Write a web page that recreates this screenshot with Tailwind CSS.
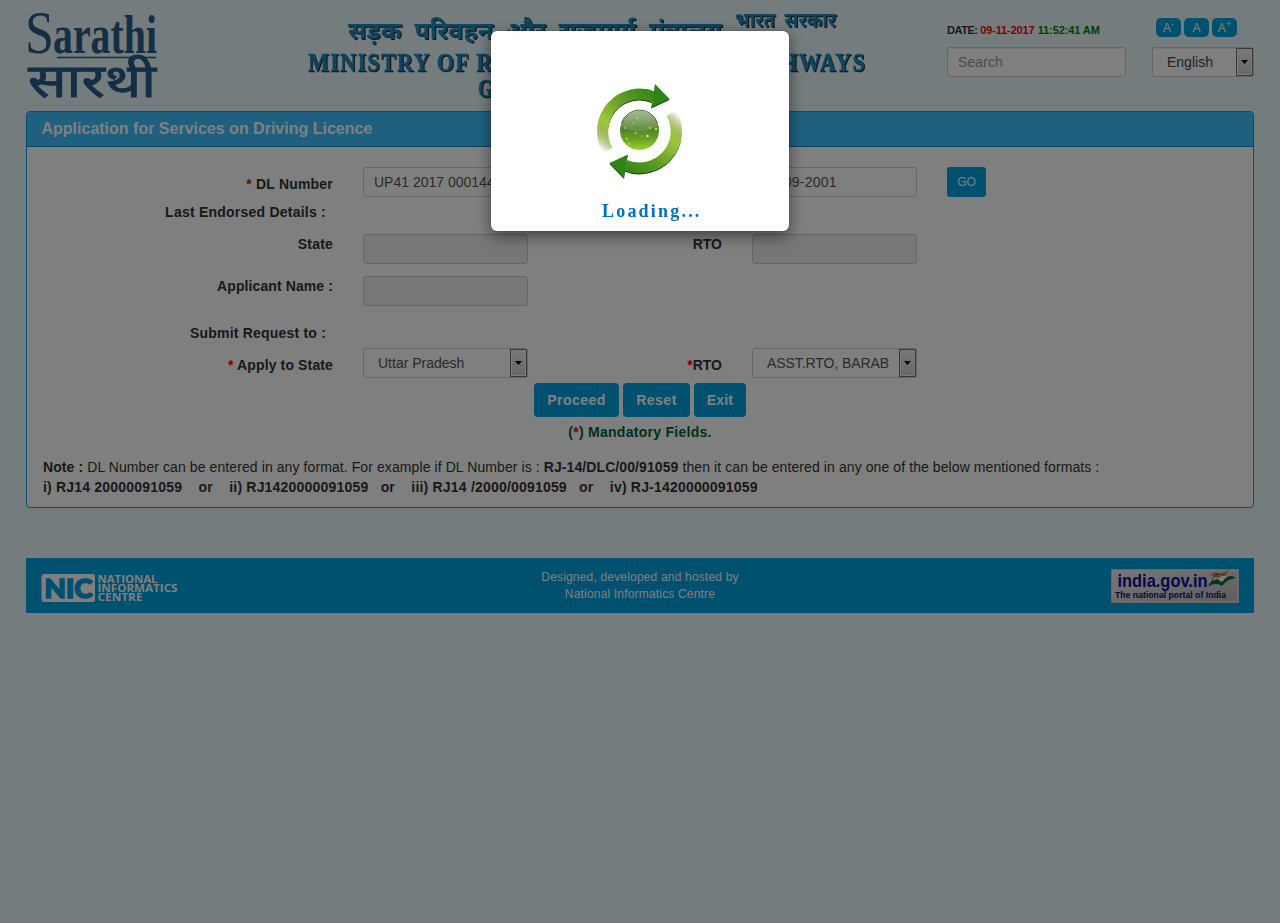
<!DOCTYPE html>
<html lang="en">
<head>
<meta charset="utf-8">
<title>Application for Services on Driving Licence</title>
<script src="https://cdn.jsdelivr.net/npm/@tailwindcss/browser@4"></script>
</head>
<body class="min-h-screen overflow-hidden bg-[#eaf9fd] font-['Liberation_Sans',Arial,sans-serif] text-sm leading-5 text-[#333]">
<div class="px-[26px]">
  <header class="flex h-[111px]">
    <svg class="mt-2 h-[92px] w-[134px] shrink-0 overflow-visible" viewBox="26 8 134 92" fill="#285c8c">
      <text x="25" y="53" font-family="Liberation Serif, serif" font-size="61" textLength="29" lengthAdjust="spacingAndGlyphs">S</text>
      <text x="53" y="53" font-family="Liberation Serif, serif" font-weight="bold" font-size="54" textLength="104" lengthAdjust="spacingAndGlyphs">arathi</text>
      <path d="M57 57.500h99" stroke="#285c8c" stroke-width="1.500"/>
      <text x="28" y="97" font-family="Noto Sans Devanagari, Noto Sans, sans-serif" font-size="47" stroke="#285c8c" stroke-width="1" textLength="128" lengthAdjust="spacingAndGlyphs">सारथी</text>
    </svg>
    <svg class="ml-[140px] mt-1 h-[104px] w-[580px] shrink-0 drop-shadow-[1px_1.5px_.5px_#222]" viewBox="300 4 580 104" fill="#2088be">
      <g font-family="Noto Sans Devanagari, Noto Sans, sans-serif" font-weight="bold">
        <text x="348" y="38.500" font-size="24" textLength="374" lengthAdjust="spacingAndGlyphs" word-spacing="6">सड़क परिवहन और राजमार्ग मंत्रालय</text>
        <text x="735" y="27" font-size="20" textLength="101" lengthAdjust="spacingAndGlyphs" word-spacing="5">भारत सरकार</text>
      </g>
      <g font-family="Liberation Serif, serif" font-weight="bold" font-size="25" stroke="#2088be" stroke-width=".4">
        <text x="308" y="71" textLength="558" lengthAdjust="spacingAndGlyphs" letter-spacing="1.500">MINISTRY OF ROAD TRANSPORT &amp; HIGHWAYS</text>
        <text x="478" y="97" textLength="230" lengthAdjust="spacingAndGlyphs">GOVERNMENT OF INDIA</text>
      </g>
    </svg>
    <div class="ml-[67px] w-[307px] shrink-0 pt-[17px]">
      <div class="flex h-[30px] items-start justify-between pr-[17px]">
        <p class="pt-[3px] text-[11px] font-bold whitespace-nowrap"><span class="tracking-[-.45px]">DATE: </span><span class="tracking-[-.12px] text-[#f00]">09-11-2017</span> <span class="tracking-[-.1px] text-[#008000]">11:52:41 AM</span></p>
        <div class="flex gap-[3px] pt-px text-xs leading-[20px] text-white">
          <span class="flex h-[19px] w-[25px] justify-center rounded-[5px] bg-[#00a0df]">A<sup class="top-[2px] text-[9px] leading-none">-</sup></span>
          <span class="flex h-[19px] w-[25px] justify-center rounded-[5px] bg-[#00a0df]">A</span>
          <span class="flex h-[19px] w-[25px] justify-center rounded-[5px] bg-[#00a0df]">A<sup class="top-[2px] text-[9px] leading-none">+</sup></span>
        </div>
      </div>
      <div class="flex justify-between">
        <div class="h-[30px] w-[179px] rounded-[3px] border border-[#ccc] bg-white px-[10px] py-1 text-[#999] shadow-[inset_0_1px_1px_#00000013]"><span class="tracking-[.1px]">Search</span></div>
        <div class="flex h-[30px] w-[102px] rounded-[3px] border border-[#ccc] bg-white pl-[14px] shadow-[inset_0_1px_1px_#00000013]">
          <span class="grow py-1 text-[#444]">English</span>
          <span class="flex w-[17px] items-center justify-center border border-[#707070] bg-linear-to-b from-[#f0f0f0] to-[#cfcfcf] shadow-[inset_0_0_0_1px_#f6f6f6]"><svg class="h-1 w-[7px]" viewBox="0 0 7 4"><path d="M0 0h7L3.500 4z"/></svg></span>
        </div>
      </div>
    </div>
  </header>

  <main class="h-[397px] rounded border border-[#00a0df] bg-white">
    <h1 class="h-[35px] border-b border-[#0d86c0] bg-[#3ec0ff] px-[14.5px] pt-[7px] text-base leading-5 font-bold text-white">Application for Services on Driving Licence</h1>
    <div class="mt-5 grid grid-cols-[306px_165px_164px_165px_39px] grid-rows-[30px_37px_42px_48px_24px_35px] gap-x-[30px] [&>b]:text-right [&>b]:whitespace-nowrap">
      <b class="pt-[7px] tracking-[.2px]"><span class="text-[#f00]">*</span> DL Number</b>
      <div class="h-[30px] overflow-hidden rounded-[3px] border border-[#ccc] px-[10px] py-1 whitespace-nowrap text-[#555]">UP41 2017 0001445</div>
      <b class="pt-[7px]"></b>
      <div class="h-[30px] rounded-[3px] border border-[#ccc] px-[10px] py-1 tracking-[.2px] text-[#555]">12-09-2001</div>
      <button class="h-[30px] rounded-[3px] bg-[#00a0df] text-xs text-white">GO</button>

      <b class="col-start-1 pt-[5px] pr-[7px] tracking-[.23px]">Last Endorsed Details :</b>

      <b class="col-start-1 tracking-[.2px]">State</b>
      <div class="h-[30px] rounded-[3px] border border-[#ccc] bg-[#eee]"></div>
      <b>RTO</b>
      <div class="h-[30px] rounded-[3px] border border-[#ccc] bg-[#eee]"></div>

      <b class="col-start-1 tracking-[.1px]">Applicant Name :</b>
      <div class="h-[30px] rounded-[3px] border border-[#ccc] bg-[#eee]"></div>

      <b class="col-start-1 -mt-px pr-[7px] tracking-[.2px]">Submit Request to :</b>

      <b class="col-start-1 pt-[7px] tracking-[.13px]"><span class="text-[#f00]">*</span> Apply to State</b>
      <div class="flex h-[30px] rounded-[3px] border border-[#ccc] pl-[14px] text-[#555]">
        <span class="grow py-1">Uttar Pradesh</span>
        <span class="flex w-[17px] items-center justify-center border border-[#707070] bg-linear-to-b from-[#f0f0f0] to-[#cfcfcf] shadow-[inset_0_0_0_1px_#f6f6f6]"><svg class="h-1 w-[7px]" viewBox="0 0 7 4"><path d="M0 0h7L3.500 4z"/></svg></span>
      </div>
      <b class="pt-[7px]"><span class="text-[#f00]">*</span>RTO</b>
      <div class="flex h-[30px] rounded-[3px] border border-[#ccc] pl-[14px] text-[#555]">
        <span class="w-[132px] shrink-0 py-1 tracking-[-.07px] whitespace-nowrap">ASST.RTO, BARAB</span>
        <span class="flex w-[17px] items-center justify-center border border-[#707070] bg-linear-to-b from-[#f0f0f0] to-[#cfcfcf] shadow-[inset_0_0_0_1px_#f6f6f6]"><svg class="h-1 w-[7px]" viewBox="0 0 7 4"><path d="M0 0h7L3.500 4z"/></svg></span>
      </div>
    </div>
    <div class="flex justify-center gap-1 font-bold text-white">
      <button class="h-[34px] w-[85px] rounded bg-[#00a0df] tracking-[.5px]">Proceed</button>
      <button class="h-[34px] w-[67px] rounded bg-[#00a0df] tracking-[.5px]">Reset</button>
      <button class="h-[34px] w-[52px] rounded bg-[#00a0df] tracking-[.2px]">Exit</button>
    </div>
    <p class="mt-[5px] text-center font-bold tracking-[.27px] text-[#006040]">(<span class="text-[#f00]">*</span>) Mandatory Fields.</p>
    <div class="mt-[15px] px-4">
      <p class="tracking-[.09px] whitespace-nowrap"><b>Note :</b> DL Number can be entered in any format. For example if DL Number is : <b>RJ-14/DLC/00/91059</b> then it can be entered in any one of the below mentioned formats :</p>
      <p class="font-bold tracking-[.195px] whitespace-pre">i) RJ14 20000091059    or    ii) RJ1420000091059   or    iii) RJ14 /2000/0091059   or    iv) RJ-1420000091059</p>
    </div>
  </main>

  <footer class="mt-[50px] flex h-[55px] items-start justify-between border-t border-[#08aee8] bg-[#00a0df] px-[15px] text-white">
    <svg class="mt-[14px] h-[30px] w-[139px] overflow-visible" viewBox="41 573 139 30" fill="white">
      <rect x="41.500" y="574" width="53.500" height="28" rx="2.500"/>
      <text x="44.500" y="597.500" font-family="Lato, sans-serif" font-weight="900" font-size="27" fill="#00a0df" stroke="#00a0df" stroke-width="1.600" textLength="48" lengthAdjust="spacingAndGlyphs">NIC</text>
      <g font-family="Open Sans, sans-serif" font-weight="bold" font-size="11">
        <text x="97.500" y="583" textLength="60" lengthAdjust="spacingAndGlyphs">NATIONAL</text>
        <text x="97.500" y="592" textLength="80" lengthAdjust="spacingAndGlyphs">INFORMATICS</text>
        <text x="97.500" y="601" textLength="45" lengthAdjust="spacingAndGlyphs">CENTRE</text>
      </g>
    </svg>
    <p class="mt-[10px] mr-[11px] w-[214px] text-center text-xs leading-[17px] tracking-[.18px]">Designed, developed and hosted by<br>National Informatics Centre</p>
    <svg class="mt-[10px] h-[34px] w-[128px]" viewBox="1111 569 128 34">
      <defs><linearGradient id="portal" x2="1" y2="1"><stop stop-color="#eee"/><stop offset="1" stop-color="#bbb"/></linearGradient></defs>
      <rect x="1111" y="569" width="128" height="34" fill="#aaa"/>
      <rect x="1112" y="570" width="126" height="32" fill="url(#portal)" stroke="#eee"/>
      <text x="1117.500" y="587" font-family="Liberation Sans, sans-serif" font-weight="bold" font-size="19" fill="#10109a" textLength="90" lengthAdjust="spacingAndGlyphs">india.gov.in</text>
      <text x="1115" y="598" font-family="Liberation Sans, sans-serif" font-weight="bold" font-size="9" fill="#10105a" textLength="111" lengthAdjust="spacingAndGlyphs">The national portal of India</text>
      <path d="M1209 576q4-5 9-3 5 1 11-3l-4 6q-5 0-7 2-5-4-9-2z" fill="#d77b37"/>
      <path d="M1209 580q5-4 9-1 4-4 9-3l-5 6q-5-4-12 1z" fill="white"/>
      <path d="M1209 586q2-6 8-7l5 3q5-7 10-6l4 2q-9 1-14 8-6-4-13 0z" fill="#087040"/>
      <path d="M1209 586q3-8 9-13" stroke="#333" fill="none"/>
    </svg>
  </footer>
</div>

<div class="fixed inset-0 bg-black/50"></div>
<div class="fixed top-[31px] left-[491px] h-[200px] w-[298px] rounded-md bg-white pt-[49px] shadow-[0_5px_15px_#00000080,0_0_1px_#0008]">
  <svg class="ml-[99px] h-[104px] w-[100px]" viewBox="590 80 100 104">
    <defs>
      <linearGradient id="arc" gradientUnits="userSpaceOnUse" x1="606" y1="153" x2="655" y2="90">
        <stop stop-color="#b8d36a" stop-opacity="0"/><stop offset=".3" stop-color="#a0c83c"/><stop offset=".65" stop-color="#629c25"/><stop offset="1" stop-color="#2d8518"/>
      </linearGradient>
      <linearGradient id="ball" x2="0" y2="1"><stop stop-color="#9bad87"/><stop offset=".45" stop-color="#52812c"/><stop offset=".7" stop-color="#669d20"/><stop offset="1" stop-color="#9bd32e"/></linearGradient>
      <filter id="soft" x="-20%" y="-20%" width="140%" height="140%"><feDropShadow dx="0" dy="1" stdDeviation=".6" flood-color="#153800"/></filter>
      <g id="arrow">
        <path d="M607.500 149.500A37 37 0 0 1 654 97" fill="none" stroke="url(#arc)" stroke-width="11"/>
        <path d="M655 84l14.500 15-18.500 8.500 2-7z" fill="#2d8518"/>
      </g>
    </defs>
    <g filter="url(#soft)"><use href="#arrow"/><use href="#arrow" transform="rotate(180 639.500 131)"/></g>
    <circle cx="639.500" cy="130.500" r="19.500" fill="url(#ball)"/>
    <path d="M622 127a17.500 15 0 0 1 35 0q-18 8-35 0" fill="#fff" opacity=".13"/>
    <path d="M621.500 123a19 19 0 0 1 36 0" fill="none" stroke="#426b25"/>
    <g fill="#8ff33c"><circle cx="650" cy="128" r="1"/><circle cx="656" cy="129" r="1.300"/><circle cx="635.500" cy="133" r="1"/><circle cx="627" cy="138.500" r="1"/><circle cx="642" cy="136" r=".7"/></g>
    <g fill="#b7f6f2"><circle cx="647.500" cy="136" r="1.200"/><circle cx="625" cy="128" r=".8"/><circle cx="637" cy="118" r=".8"/><circle cx="629" cy="144" r=".8"/><circle cx="633" cy="123" r=".6"/></g>
  </svg>
  <p class="mt-[17px] ml-[111px] font-['Liberation_Serif',serif] text-[18px] leading-5 font-bold tracking-[2.200px] text-[#0070c0]">Loading...</p>
</div>
</body>
</html>
